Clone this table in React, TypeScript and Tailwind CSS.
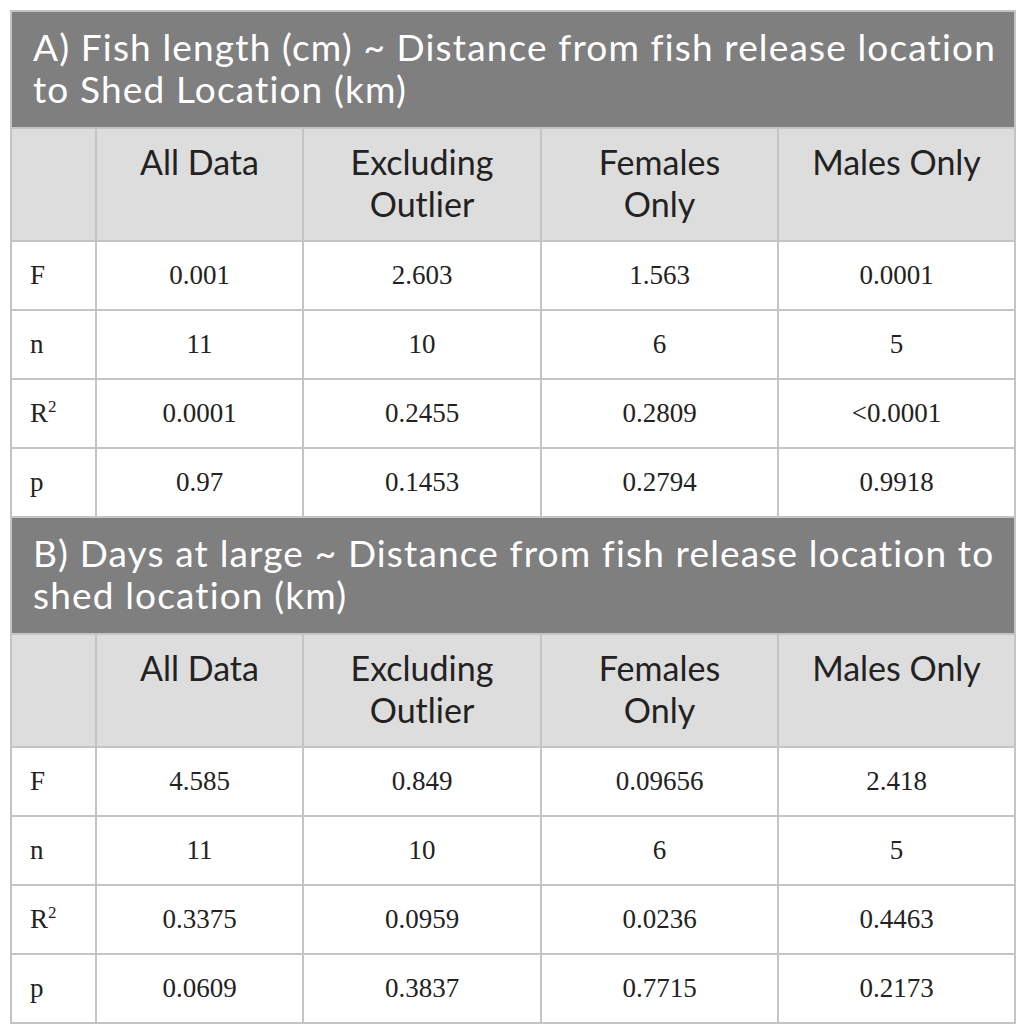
import React from "react";

type Row = { label: React.ReactNode; values: string[] };

const Sq = () => (
  <>
    R<sup className="text-[17px] relative top-[-10px] leading-none">2</sup>
  </>
);

const sectionA: Row[] = [
  { label: "F", values: ["0.001", "2.603", "1.563", "0.0001"] },
  { label: "n", values: ["11", "10", "6", "5"] },
  { label: <Sq />, values: ["0.0001", "0.2455", "0.2809", "<0.0001"] },
  { label: "p", values: ["0.97", "0.1453", "0.2794", "0.9918"] },
];

const sectionB: Row[] = [
  { label: "F", values: ["4.585", "0.849", "0.09656", "2.418"] },
  { label: "n", values: ["11", "10", "6", "5"] },
  { label: <Sq />, values: ["0.3375", "0.0959", "0.0236", "0.4463"] },
  { label: "p", values: ["0.0609", "0.3837", "0.7715", "0.2173"] },
];

const headers: React.ReactNode[] = [
  "All Data",
  <>Excluding<br />Outlier</>,
  <>Females<br />Only</>,
  "Males Only",
];

const sans = "font-['Lato','Noto_Sans',sans-serif]";
const serif = "font-['Liberation_Serif','Times_New_Roman',serif]";

function Section({ title, rows }: { title: React.ReactNode; rows: Row[] }) {
  return (
    <>
      <tr>
        <td
          colSpan={5}
          className={`${sans} bg-[#7f7f7f] text-white text-[37px] tracking-[1.15px] leading-[42px] pl-[21px] pr-[2px] pt-[14px] pb-[17px] h-[115px] align-top border-2 border-[#c4c4c4] whitespace-nowrap`}
        >
          {title}
        </td>
      </tr>
      <tr className="bg-[#dddddd]">
        <td className="border-2 border-[#c4c4c4] h-[113px]"></td>
        {headers.map((h, i) => (
          <td
            key={i}
            className={`${sans} border-2 border-[#c4c4c4] text-[#222] text-[34px] leading-[42px] text-center align-top pt-[12px]`}
          >
            {h}
          </td>
        ))}
      </tr>
      {rows.map((r, i) => (
        <tr key={i} className="bg-white h-[69px]">
          <td className={`${serif} border-2 border-[#c4c4c4] text-[#222] text-[27px] pl-[18px] align-middle`}>
            {r.label}
          </td>
          {r.values.map((v, j) => (
            <td
              key={j}
              className={`${serif} border-2 border-[#c4c4c4] text-[#222] text-[27px] text-center align-middle`}
            >
              {v}
            </td>
          ))}
        </tr>
      ))}
    </>
  );
}

export default function App() {
  return (
    <div className="w-[1025px] h-[1032px] bg-white pt-[10px] pl-[10px]">
      <table className="border-collapse table-fixed w-[1004px] border-2 border-[#c4c4c4]">
        <colgroup>
          <col className="w-[85px]" />
          <col className="w-[207px]" />
          <col className="w-[238px]" />
          <col className="w-[237px]" />
          <col className="w-[237px]" />
        </colgroup>
        <tbody>
          <Section
            title={<>A) Fish length (cm) ~ Distance from fish release location<br />to Shed Location (km)</>}
            rows={sectionA}
          />
          <Section
            title={<>B) Days at large ~ Distance from fish release location to<br />shed location (km)</>}
            rows={sectionB}
          />
        </tbody>
      </table>
    </div>
  );
}
